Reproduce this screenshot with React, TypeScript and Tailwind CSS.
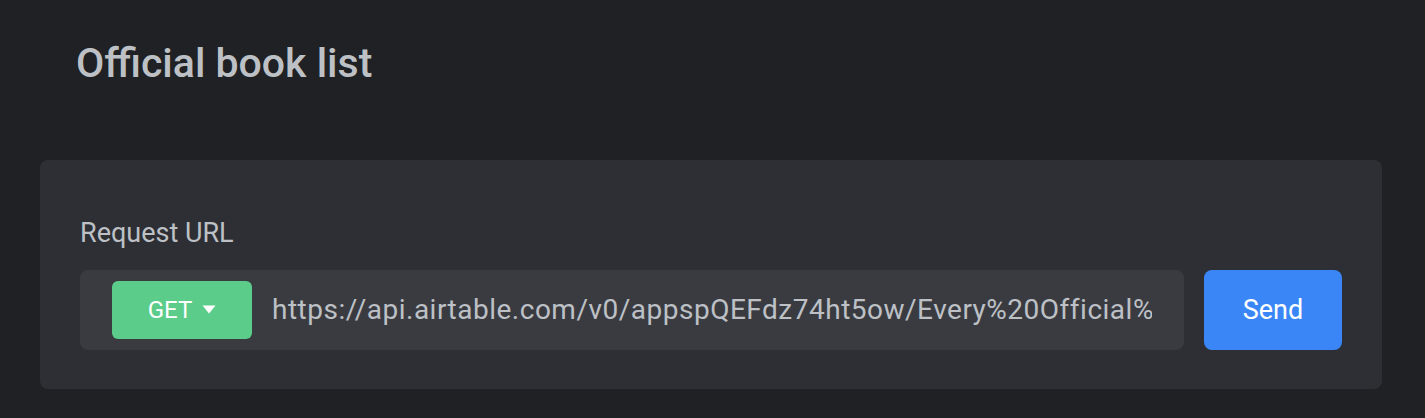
export default function App() {
  const url =
    "https://api.airtable.com/v0/appspQEFdz74ht5ow/Every%20Official%20Book%20List?api_key=keyXXXXXXXX";

  return (
    <div className="min-h-[418px] w-full bg-[#202124] pl-10 pt-[39px] font-['Roboto',sans-serif]">
      {/* Title */}
      <h1 className="pl-9 text-[41px] leading-[48px] font-medium text-[#bdc1c6]">
        Official book list
      </h1>

      {/* Request card */}
      <div className="mt-[73px] w-[1342px] rounded-lg bg-[#2e2f34] px-10 pt-[57px] pb-[39px]">
        <div className="text-[27px] leading-[32px] text-[#bdc1c6]">Request URL</div>

        <div className="mt-[21px] flex items-center gap-5">
          <div className="flex h-20 min-w-0 flex-1 items-center gap-5 rounded-lg bg-[#3a3b41] px-8">
            <button className="flex h-[58px] w-[140px] shrink-0 items-center justify-center gap-[10px] rounded-md bg-[#5bcc89] text-[24px] text-white">
              GET
              <svg width="14" height="9" viewBox="0 0 14 9" className="mt-[-2px]">
                <path d="M0.5 0.5 H13.5 L7 8.5 Z" fill="white" />
              </svg>
            </button>
            <div className="min-w-0 flex-1 overflow-hidden whitespace-nowrap text-[28px] tracking-[0.5px] text-[#bdc1c6]">
              {url}
            </div>
          </div>

          <button className="h-20 w-[138px] shrink-0 rounded-lg bg-[#3b86f7] text-[27px] text-white">
            Send
          </button>
        </div>
      </div>
    </div>
  );
}
